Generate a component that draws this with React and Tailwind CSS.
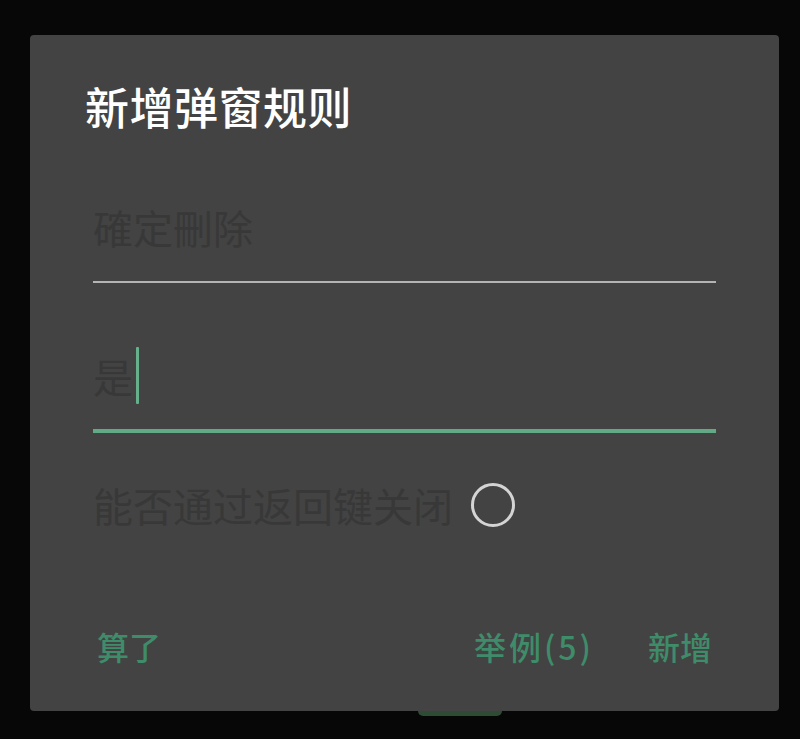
import { useState } from "react";

const cjk = "font-['Noto_Sans_CJK_SC','Noto_Sans',sans-serif]";

const App = () => {
  const [value, setValue] = useState("是");
  const [closable, setClosable] = useState(false);

  return (
    <div className={`min-h-[739px] w-[800px] bg-[#070707] pt-[35px] ${cjk}`}>
      {/* Dialog */}
      <div className="ml-[30px] w-[749px] h-[676px] bg-[#434343] rounded-[4px] flex flex-col">
        <h1 className="mt-[49px] pl-[55px] text-[44px] tracking-[0.5px] leading-none text-white font-medium">
          新增弹窗规则
        </h1>

        {/* Title field */}
        <div className="mt-[79px] mx-[63px]">
          <div className="text-[40px] leading-none text-[#383838]">確定刪除</div>
          <div className="mt-[34px] h-[2px] bg-[#b4b4b4]" />
        </div>

        {/* Button text field (focused) */}
        <div className="mt-[64px] mx-[63px]">
          <div className="flex items-center h-[57px]">
            <span className="text-[40px] leading-none text-[#383838]">{value}</span>
            <span className="ml-[3px] w-[3px] h-[57px] bg-[#66b08b] rounded-[1px]" />
          </div>
          <div className="mt-[25px] h-[4px] bg-[#62a985]" />
        </div>

        {/* Checkbox row */}
        <div className="mt-[50px] mx-[63px] flex items-center h-[44px]">
          <span className="text-[40px] leading-none text-[#383838]">能否通过返回键关闭</span>
          <button
            onClick={() => setClosable(!closable)}
            className="ml-[18px] w-[44px] h-[44px] rounded-full border-[3px] border-[#d4d4d4]"
          />
        </div>

        {/* Actions */}
        <div className="mt-[103px] px-[67px] flex items-center text-[32px] leading-none font-medium text-[#3f8c6a]">
          <button onClick={() => setValue("")}>算了</button>
          <div className="flex-1" />
          <button className="tracking-[3px]">举例(5)</button>
          <button className="ml-[54px]">新增</button>
        </div>
      </div>
      <div className="ml-[418px] w-[84px] h-[5px] bg-[#2e4c33] rounded-b-[6px]" />
    </div>
  );
};

export default App;
